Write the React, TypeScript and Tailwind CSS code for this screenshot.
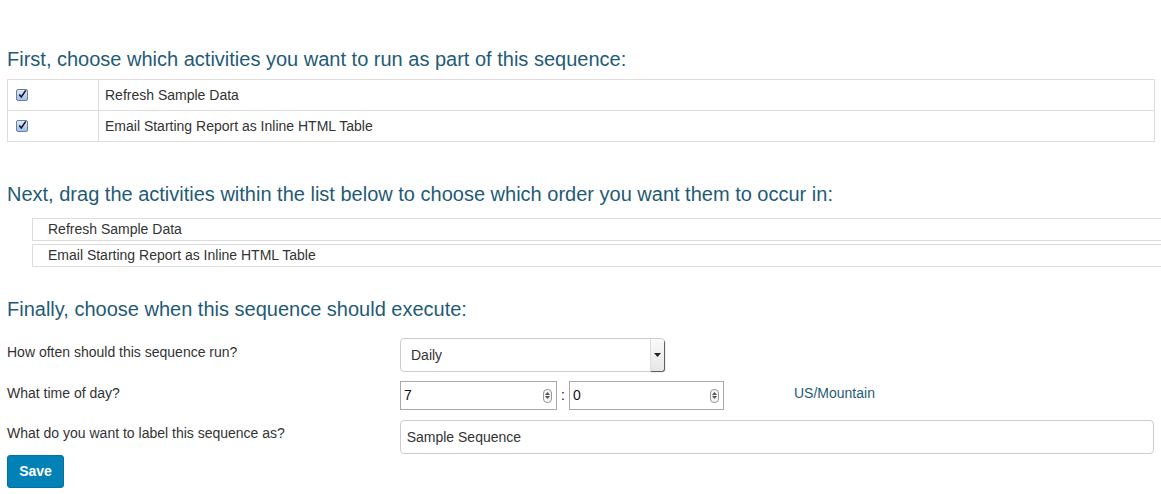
import { useState } from "react";

const activities = ["Refresh Sample Data", "Email Starting Report as Inline HTML Table"];

function CheckBox() {
  return (
    <span className="flex h-[12px] w-[12px] items-center justify-center rounded-[2px] border border-[#6b7f99] bg-gradient-to-b from-[#dbe9fb] to-[#9fc1ee]">
      <svg width="11" height="11" viewBox="0 0 11 11" className="-mt-[2px] ml-[1px]">
        <path d="M1.5 5.5 L4 8.5 L9.5 0.5" fill="none" stroke="#111" strokeWidth="1.8" />
      </svg>
    </span>
  );
}

function Spinner() {
  return (
    <span className="flex h-[14px] w-[9px] flex-col items-center justify-center gap-[1px] rounded-[4px] border border-[#9a9a9a] bg-[#f4f4f4]">
      <svg width="5" height="3" viewBox="0 0 5 3">
        <path d="M0 3 L2.5 0 L5 3Z" fill="#555" />
      </svg>
      <svg width="5" height="3" viewBox="0 0 5 3">
        <path d="M0 0 L2.5 3 L5 0Z" fill="#555" />
      </svg>
    </span>
  );
}

function Heading({ children }: { children: React.ReactNode }) {
  return <h2 className="text-[20px] leading-[24px] text-[#1f5b77]">{children}</h2>;
}

export default function App() {
  const [label, setLabel] = useState("Sample Sequence");

  return (
    <main className="min-h-screen bg-white px-[7px] pt-[47px] font-['Liberation_Sans',Arial,sans-serif] text-[14px] text-[#333]">
      <Heading>First, choose which activities you want to run as part of this sequence:</Heading>
      <table className="mt-[8px] w-[1148px] border-collapse border border-[#ddd]">
        <tbody>
          {activities.map((a) => (
            <tr key={a} className="h-[31px] border-t border-[#ddd]">
              <td className="w-[91px] border-r border-[#ddd] pl-[8px] align-middle">
                <CheckBox />
              </td>
              <td className="pl-[6px] align-middle">{a}</td>
            </tr>
          ))}
        </tbody>
      </table>

      <div className="mt-[40px]">
        <Heading>Next, drag the activities within the list below to choose which order you want them to occur in:</Heading>
      </div>
      <ul className="-mr-[7px] mt-[12px] ml-[25px] flex flex-col gap-[3px]">
        {activities.map((a) => (
          <li key={a} className="flex h-[23px] items-center border border-r-0 border-[#ddd] pl-[15px]">
            {a}
          </li>
        ))}
      </ul>

      <div className="mt-[30px]">
        <Heading>Finally, choose when this sequence should execute:</Heading>
      </div>

      <div className="mt-[17px] flex items-center">
        <label className="-mt-[6px] w-[393px]">How often should this sequence run?</label>
        <div className="flex h-[34px] w-[265px] items-center justify-between rounded-[4px] border border-[#ccc] bg-white pl-[10px]">
          <span>Daily</span>
          <span className="flex h-[32px] w-[14px] items-center justify-center rounded-r-[3px] border-l border-[#ddd] bg-gradient-to-b from-[#fafafa] to-[#e6e6e6] shadow-[1px_1px_1px_#555]">
            <svg width="7" height="4" viewBox="0 0 7 4">
              <path d="M0 0 L7 0 L3.5 4Z" fill="#222" />
            </svg>
          </span>
        </div>
      </div>

      <div className="mt-[9px] flex items-center">
        <label className="-mt-[4px] w-[393px]">What time of day?</label>
        <div className="flex h-[29px] w-[157px] items-center justify-between border border-[#aaa] pl-[3px] pr-[4px] text-[14px] text-[#111]">
          <span>7</span>
          <Spinner />
        </div>
        <span className="w-[12px] text-center text-[14px] text-[#111]">:</span>
        <div className="flex h-[29px] w-[155px] items-center justify-between border border-[#aaa] pl-[3px] pr-[4px] text-[14px] text-[#111]">
          <span>0</span>
          <Spinner />
        </div>
        <span className="-mt-[4px] ml-[70px] text-[#1f5b77]">US/Mountain</span>
      </div>

      <div className="mt-[10px] flex items-center">
        <label className="-mt-[8px] w-[393px]">What do you want to label this sequence as?</label>
        <input
          value={label}
          onChange={(e) => setLabel(e.target.value)}
          className="h-[34px] w-[755px] rounded-[4px] border border-[#ccc] px-[6px] text-[14px] text-[#333] outline-none"
        />
      </div>

      <button className="mt-[1px] flex h-[33px] w-[57px] items-center justify-center rounded-[3px] border border-[#0071a0] bg-[#0181b5] text-[14px] font-bold text-white">
        Save
      </button>
    </main>
  );
}
